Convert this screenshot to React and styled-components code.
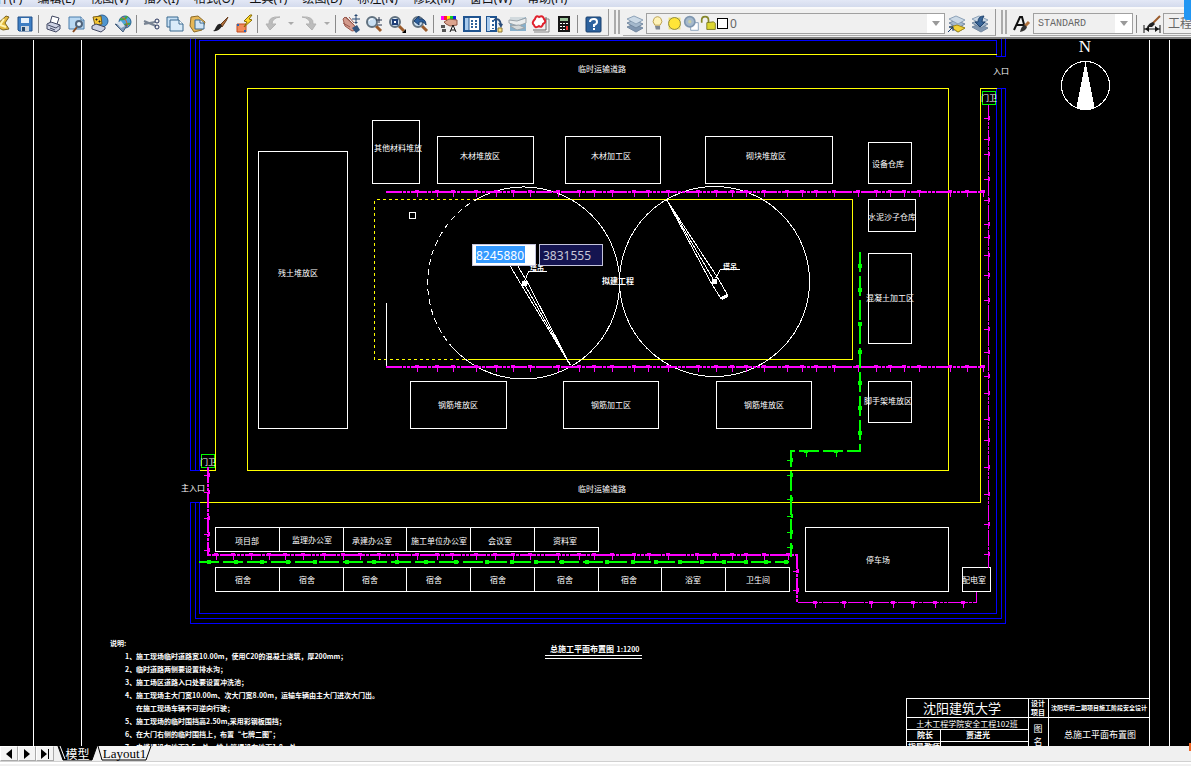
import styled, { createGlobalStyle } from "styled-components";

const menus = [
  "文件(F)",
  "编辑(E)",
  "视图(V)",
  "插入(I)",
  "格式(O)",
  "工具(T)",
  "绘图(D)",
  "标注(N)",
  "修改(M)",
  "窗口(W)",
  "帮助(H)",
];

const printer = (
  <>
    <path d="M6 9 8 2l7 2-2 6" fill="#fff" stroke="#3f4660" />
    <path d="M3 10l4-2 9 3v4l-4 3-9-3z" fill="#cdd2e4" stroke="#3f4660" />
    <path d="M4 11l8 3 4-3M6 14l5 2" fill="none" stroke="#3f4660" />
  </>
);

const lens = (
  <>
    <path d="M12 12l5 5" stroke="#9a5b2b" strokeWidth="3" />
    <circle cx="8" cy="8" r="5" fill="#c9dff2" stroke="#61717f" strokeWidth="2" />
    <path d="M5 7q1-3 4-2" fill="none" stroke="#fff" />
  </>
);

const layers = (
  <>
    <path d="M2 13l7-3 9 4-7 4z" fill="#8096b0" stroke="#7388a0" />
    <path d="M2 9l7-3 9 4-7 4z" fill="#a4b8cc" stroke="#7388a0" />
    <path d="M2 5l7-3 9 4-7 4z" fill="#cbd9e6" stroke="#8da2b8" />
  </>
);

const icons = {
  open: (
    <>
      <path d="M3 12 14 2l3 1-4 6 4 6-6 1z" fill="#e3b93c" stroke="#7b6420" />
      <path d="M12 5 8 11l6 2" fill="none" stroke="#fff3b0" strokeWidth="2" />
    </>
  ),
  save: (
    <>
      <path d="M3 3h14v14H4l-1-1z" fill="#3e7fc4" stroke="#1f4f88" />
      <path d="M6 4h8v5H6z" fill="#e8f2fb" />
      <path d="M6 12h8v5H6z" fill="#cfd8e0" />
      <path d="M7 13h3v4H7z" fill="#23486e" />
    </>
  ),
  print: printer,
  preview: (
    <>
      <path d="M2 3h12l3 3v9H2z" fill="#b9d8f2" stroke="#4b7cab" />
      <path d="M14 3v3h3" fill="#fff" stroke="#4b7cab" />
      <path d="M10 13l-4 5" stroke="#8a4a1e" strokeWidth="2" />
      <circle cx="12" cy="10" r="3" fill="#e6f3fd" stroke="#50647c" strokeWidth="2" />
    </>
  ),
  publish: (
    <>
      <circle cx="12" cy="7" r="6" fill="#4f95cf" stroke="#2a5f92" />
      <path d="M3 3l8-1 1 8-7 1z" fill="#f4c534" stroke="#7a5c12" />
      <path d="M6 5h1v1H6zM9 7h1v1H9z" stroke="#222" />
      <path d="M2 12l4-2 9 3v2l-4 3-9-3z" fill="#cdd2e4" stroke="#3f4660" />
    </>
  ),
  globe: (
    <>
      <circle cx="12" cy="8" r="6" fill="#4fa4d8" stroke="#28618f" />
      <path d="M7 5q6 1 7-3M9 13q5-4 8-3" fill="none" stroke="#45a53d" strokeWidth="2" />
      <path d="M9 3q6 3 5 10" fill="none" stroke="#e35d2d" />
      <path d="M2 10l6 2 6-1-4 7z" fill="#7f9ab9" stroke="#46607e" />
      <path d="M3 9l5-2 4 5-4 2z" fill="#d7e2ee" />
    </>
  ),
  cut: (
    <>
      <path d="M2 7l12 5M2 10l11-2" stroke="#7a8594" strokeWidth="2" />
      <circle cx="15" cy="7" r="2" fill="none" stroke="#27345c" />
      <circle cx="15" cy="13" r="2" fill="none" stroke="#27345c" />
    </>
  ),
  copy: (
    <>
      <path d="M2 3h11v10H2z" fill="#c7e0f5" stroke="#38688f" />
      <path d="M5 6h9l4 4v7H5z" fill="#d9ebf9" stroke="#38688f" />
      <path d="M14 6v4h4" fill="#fff" stroke="#38688f" />
    </>
  ),
  paste: (
    <>
      <path d="M3 3l7-1 7 6-3 8-8 2-4-6z" fill="#e6b756" stroke="#8d6a26" />
      <path d="M7 6h5l4 3v6H7z" fill="#cfe4f5" stroke="#38688f" />
      <path d="M12 6v3h4" fill="#fff" stroke="#38688f" />
    </>
  ),
  brush: (
    <>
      <path d="M9 11l7-7 1-1-2 4-4 6z" fill="#b0713c" stroke="#6a3d1c" />
      <path d="M10 10q-3-1-5 3-1 3-3 4 6 1 9-5z" fill="#222" />
    </>
  ),
  match: (
    <>
      <path d="M3 10h9v8H3z" fill="#f08a5a" stroke="#c14a1f" />
      <path d="M3 10h2v2H3zM10 16h2v2h-2z" fill="#2a64b4" />
      <path d="M16 1l-6 6 3 1-3 5 8-7-3-1 3-4z" fill="#ffd92e" stroke="#8a6d00" />
    </>
  ),
  undo: (
    <path d="M17 3Q9 4 9 10h4l-6 6-4-6h3Q5 2 17 3z" fill="#bcbcbc" stroke="#b2b2b2" />
  ),
  redo: (
    <path d="M3 3q8 1 8 7H7l6 6 4-6h-3Q15 2 3 3z" fill="#bcbcbc" stroke="#b2b2b2" />
  ),
  pan: (
    <>
      <path d="M2 5l2-2 9 8 3 5-5 1-7-5z" fill="#d39a8c" stroke="#98584c" />
      <path d="M2 9l7 4M5 3l8 8M8 3l5 6" stroke="#98584c" />
      <path d="M11 14l5-3 3 5-4 3z" fill="#31557f" />
      <path d="M15 1v8M11 5h8" stroke="#2b4a72" />
      <path d="M15 0l2 2h-4zM15 10l2-2h-4z" fill="#2b4a72" />
    </>
  ),
  zoom: (
    <>
      {lens}
      <path d="M15 3v6M12 6h6M13 11h5" stroke="#24324d" />
    </>
  ),
  zoomWindow: (
    <>
      {lens}
      <path d="M6 6h4v4H6z" fill="#fff" stroke="#1f3f78" strokeWidth="2" />
      <path d="M19 15v4h-4z" fill="#000" />
    </>
  ),
  zoomPrevious: (
    <>
      {lens}
      <path d="M4 7l5-5v3q7-1 7 6-2-4-7-3v3z" fill="#2b5f9e" stroke="#1c3f6d" />
    </>
  ),
  properties: (
    <>
      <path d="M2 2h3v4H2z" fill="#f0f" />
      <path d="M5 2h3v4H5z" fill="#f22" />
      <path d="M8 2h3v4H8z" fill="#fe0" />
      <path d="M11 2h3v4h-3z" fill="#1c2" />
      <path d="M14 2h3v4h-3z" fill="#12d" />
      <path d="M5 8l5-3 8 1v5l-7 1-4-2z" fill="#dba48e" stroke="#8d5545" />
      <path d="M2 11h4v3H2zM3 15h4v3H3z" fill="#555" />
      <path d="M11 18l3-7 3 7M12 16h4" fill="none" stroke="#111" />
    </>
  ),
  designCenter: (
    <>
      <path d="M2 3h16v14H2z" fill="#fff" stroke="#1f5490" strokeWidth="2" />
      <path d="M3 4h4v12H3z" fill="#a9cbed" />
      <path d="M7 4v12" stroke="#1f5490" />
      <path d="M9 6h2v2H9zM13 6h2v2h-2zM9 9h2v2H9zM13 9h2v2h-2zM9 12h2v2H9zM13 12h2v2h-2z" fill="#2f639b" />
    </>
  ),
  palettes: (
    <>
      <path d="M2 3h9v14H2z" fill="#fff" stroke="#1f5490" strokeWidth="2" />
      <path d="M2 3h3v14H2z" fill="#a9cbed" />
      <path d="M7 6h2v2H7zM7 10h2v2H7zM7 14h2v1H7z" fill="#2f639b" />
      <path d="M9 6q6-3 7 5" fill="none" stroke="#2a4d7a" strokeWidth="2" />
      <path d="M13 9l5 1-2 4z" fill="#2a4d7a" />
      <path d="M13 14h4v4h-4z" fill="#ffe27c" stroke="#8a7635" />
    </>
  ),
  sheetSet: (
    <>
      <path d="M2 3h16v14H2z" fill="#86b0cc" />
      <path d="M2 3h16L9 7H2z" fill="#d2dade" />
      <path d="M1 6l8 1 9-3v5l-8 3-9-3z" fill="#e9eced" stroke="#9aa3a9" />
      <path d="M2 12l9-1 6 3-8 2z" fill="#d5d9da" stroke="#9aa3a9" />
    </>
  ),
  markup: (
    <>
      <path d="M5 5h13v13H3" fill="none" stroke="#888" />
      <path d="M15 3v13H2" fill="none" stroke="#666" />
      <path d="M4 5q1-4 4-2 4-2 5 2 3 3-1 5-1 4-4 2-4 3-5-1-3-2 1-6z" fill="#fff" stroke="#e0202c" strokeWidth="2" />
    </>
  ),
  calculator: (
    <>
      <path d="M4 2h12v16H4z" fill="#161616" />
      <path d="M6 4h8v3H6z" fill="#9cc59a" />
      <path d="M6 9h2v1H6zM9 9h2v1H9zM12 9h2v1h-2zM6 12h2v1H6zM9 12h2v1H9zM6 15h2v1H6zM9 15h2v1H9z" fill="#fff" />
      <path d="M12 12h2v4h-2z" fill="#e33" />
    </>
  ),
  help: (
    <>
      <rect x="3" y="3" width="15" height="15" rx="1" fill="#2d629e" stroke="#183f6c" />
      <path d="M7 8q0-3 4-3 3 0 3 3 0 2-3 3v2" fill="none" stroke="#fff" strokeWidth="2" />
      <path d="M10 14h2v2h-2z" fill="#fff" />
    </>
  ),
  layers,
  layerCurrent: (
    <>
      {layers}
      <path d="M4 13l6-2 8 3-7 4z" fill="#f2d33a" stroke="#a78b14" />
      <path d="M1 18l5-5M6 17v-4H2" fill="none" stroke="#173a6e" />
    </>
  ),
  layerPrevious: (
    <>
      {layers}
      <path d="M5 8h3q0-6 6-6-2 2-2 6h3l-5 5z" fill="#3a6698" stroke="#1e426e" />
    </>
  ),
  textStyle: (
    <>
      <path d="M2 16 8 3h2l3 11M5 11h7" fill="none" stroke="#111" strokeWidth="2" />
      <path d="M13 12l4-4" stroke="#b0713c" strokeWidth="3" />
      <path d="M13 11q-4 1-5 7 6-1 7-5z" fill="#333" />
    </>
  ),
  dimStyle: (
    <>
      <path d="M2 11v8M18 11v8M2 15h16" stroke="#111" strokeWidth="1" />
      <path d="M3 15l4-3v6zM17 15l-4-3v6z" fill="#111" />
      <path d="M11 9l7-7" stroke="#9a5b2b" strokeWidth="2" />
      <path d="M11 8q-4 1-6 5h5l3-3z" fill="#222" />
    </>
  ),
  bulb: (
    <>
      <path d="M7 12q-4-4-1-8 4-4 8 0 3 4-1 8z" fill="#fff3b8" stroke="#b39640" />
      <path d="M7 13h6v4H8z" fill="#7f8894" />
    </>
  ),
  sun: (
    <>
      <path d="M3 3h14v14H3z" fill="#f0e27a" />
      <circle cx="10" cy="10" r="7" fill="#ffe537" stroke="#7d7a3c" strokeWidth="1" />
    </>
  ),
  freeze: (
    <>
      <path d="M9 9h9v9H9z" fill="#fff" stroke="#7d98b5" />
      <circle cx="8" cy="8" r="6" fill="#a5b9cc" stroke="#7e96af" strokeWidth="2" />
      <circle cx="8" cy="8" r="2" fill="#c9cfa8" />
    </>
  ),
  lock: (
    <>
      <path d="M2 9V6q0-4 4-4t4 4v4" fill="none" stroke="#85862a" strokeWidth="2" />
      <path d="M8 9l8-1 2 2v7H8z" fill="#dcd632" stroke="#74721a" />
    </>
  ),
};

const fileTools = [
  ["open", "save"],
  ["print", "preview", "publish", "globe"],
  ["cut", "copy", "paste", "brush", "match"],
  ["undo", "undoList", "redo", "redoList"],
  ["pan", "zoom", "zoomWindow", "zoomPrevious"],
  ["properties", "designCenter", "palettes", "sheetSet", "markup", "calculator"],
  ["help"],
];

// x, y, width, height
const buildings = [
  [258, 151, 89, 277],
  [372, 120, 47, 63],
  [437, 136, 96, 47],
  [565, 136, 95, 47],
  [705, 136, 127, 47],
  [868, 142, 43, 41],
  [868, 199, 47, 32],
  [868, 253, 43, 90],
  [868, 381, 43, 41],
  [410, 381, 96, 47],
  [563, 381, 95, 47],
  [716, 381, 95, 47],
  [805, 527, 143, 64],
  [962, 567, 28, 24],
];

const labels = [
  ["临时运输道路", 602, 72],
  ["临时运输道路", 602, 492],
  ["入口", 1001, 74],
  ["主入口", 193, 491],
  ["门卫", 989, 101],
  ["门卫", 208, 465],
  ["残土堆放区", 298, 276],
  ["其他材料堆放", 398, 151],
  ["木材堆放区", 480, 159],
  ["木材加工区", 611, 159],
  ["砌块堆放区", 766, 159],
  ["设备仓库", 888, 167],
  ["水泥沙子仓库", 892, 220],
  ["混凝土加工区", 890, 301],
  ["脚手架堆放区", 888, 404],
  ["钢筋堆放区", 458, 408],
  ["钢筋加工区", 611, 408],
  ["钢筋堆放区", 764, 408],
  ["项目部", 247, 544],
  ["监理办公室", 312, 543],
  ["承建办公室", 372, 544],
  ["施工单位办公室", 439, 544],
  ["会议室", 500, 544],
  ["资料室", 565, 544],
  ["宿舍", 243, 583],
  ["宿舍", 307, 583],
  ["宿舍", 370, 583],
  ["宿舍", 434, 583],
  ["宿舍", 498, 583],
  ["宿舍", 565, 583],
  ["宿舍", 629, 583],
  ["浴室", 693, 583],
  ["卫生间", 758, 583],
  ["停车场", 878, 563],
  ["配电室", 974, 583],
];

const notes = [
  ["1、", "施工现场临时道路宽10.00m，使用C20的混凝土浇筑，厚200mm；"],
  ["2、", "临时道路两侧要设置排水沟；"],
  ["3、", "施工场区道路入口处要设置冲洗池；"],
  ["4、", "施工现场主大门宽10.00m、次大门宽8.00m，运输车辆由主大门进次大门出。"],
  ["", "在施工现场车辆不可逆向行驶；"],
  ["5、", "施工现场的临时围挡高2.50m,采用彩钢板围挡；"],
  ["6、", "在大门右侧的临时围挡上，布置“七牌二图”；"],
  ["7、", "电缆埋设在地下2.5m处，排水管埋设在地下1.8m处。"],
];

const officeWalls = [279, 343, 406, 470, 534];
const dormWalls = [279, 343, 406, 470, 534, 598, 661, 725];

const powerTicks = [
  417, 437, 453, 476, 496, 513, 530, 558, 579, 594, 612, 634, 648, 668, 698,
  716, 732, 746, 764, 787, 802, 816, 834, 858, 876, 890, 904, 919, 950, 967,
  983,
];
const lowerPowerTicks = [
  216, 233, 251, 269, 285, 303, 324, 343, 360, 379, 397, 417, 437, 452, 476,
  495, 513, 530, 558, 579, 594, 612, 634, 649, 668, 697, 715, 732, 746, 764,
  788,
];
const thinPowerTicks = [815, 844, 871, 893, 913, 935, 963];
const eastTicks = [
  118, 139, 154, 179, 200, 224, 237, 255, 275, 300, 329, 352, 376, 393, 419,
  440, 467, 494, 524, 554,
];
const westTicks = [475, 492, 518, 534, 550];
const waterTicks = [
  209, 236, 262, 288, 315, 347, 374, 397, 426, 456, 487, 512, 536, 562, 587,
  607, 633, 656, 680, 702, 724, 746, 766, 786,
];

const downTicks = (xs, y) =>
  xs.map((x) => `M${x - 2} ${y - 2}h4v3h-1v4h-1v-4h-2z`).join("");
const leftTicks = (ys, x) =>
  ys.map((y) => `M${x - 4} ${y}h4v-2h2v4h-2v-1h-4z`).join("");
const crossTicks = (points) =>
  points.map(([x, y]) => `M${x - 2} ${y - 2}h4v4h-4z`).join("");

function Icon({ name, size = 20 }) {
  return (
    <svg width={size} height={size} viewBox="0 0 20 20" aria-hidden="true">
      {icons[name]}
    </svg>
  );
}

function Tool({ name }) {
  if (name.endsWith("List")) {
    return (
      <ListButton aria-label={name}>
        <svg width="6" height="4" aria-hidden="true">
          <path d="M0 0h6l-3 3z" fill="#aaa" />
        </svg>
      </ListButton>
    );
  }
  return (
    <ToolButton aria-label={name}>
      <Icon name={name} />
    </ToolButton>
  );
}

function Arrow() {
  return (
    <ArrowBox>
      <svg width="8" height="5" aria-hidden="true">
        <path d="M0 0h8l-4 5z" fill="#9a9a9a" />
      </svg>
    </ArrowBox>
  );
}

function SitePlan() {
  return (
    <Plan role="img" aria-label="总施工平面布置图">
      <g transform="translate(0.5 -38.5)" fill="none" shapeRendering="crispEdges">
        <path
          d="M33 39V746M81 39V746M1149 39V746M1169 39V746"
          stroke="#fff"
        />

        {/* site wall */}
        <path
          d="M190 30V470H199V40H996V56H1005V30M195 30V470M1001 30V56
             M199 502H190V623H1005V88H996V613H199V502M195 502V618H1001V88"
          stroke="#00f"
        />

        {/* roads */}
        <path
          d="M996 54H215V470H199M996 88H980V502H199M247 88H948V470H247Z"
          stroke="#ff0"
        />
        <path d="M475 199H852V359H467" stroke="#ff0" />
        <path d="M475 199H374V359H467" stroke="#ff0" strokeDasharray="3 3" />

        <g stroke="#fff">
          {buildings.map(([x, y, width, height]) => (
            <rect key={`${x}-${y}`} x={x} y={y} width={width} height={height} />
          ))}
          <path d="M215 527H598V551H215ZM215 567H789V591H215Z" />
          <path d={officeWalls.map((x) => `M${x} 527v24`).join("")} />
          <path d={dormWalls.map((x) => `M${x} 567v24`).join("")} />
          <path d="M386 302V366" />
          <path d="M409 212h6v6h-6z" />
        </g>

        <path
          d="M988 104V567M797 602H976V591"
          stroke="#f0f"
          strokeDasharray="16 1 3 1 3 1"
        />
        <path d="M982 91h13v13h-13zM201 454h13v13h-13z" stroke="#0f0" />

        {/* tower cranes */}
        <g stroke="#fff">
          <path d="M474 200A96 96 0 1 1 453 348" />
          <path d="M453 348A96 96 0 0 1 474 200" strokeDasharray="6 4" />
          <circle cx="714" cy="281" r="95" />
          <path d="M570 365 520 283 510 266M570 365 526 280 517 265M570 365 523 282" />
          <path d="M666 199 711 283 721 299M666 199 717 277 728 296M666 199 714 281" />
          <path d="M524 281 528 271H546M715 278 720 269H739" />
          <path d="M721 298 727 295" strokeWidth="3" />
        </g>
        <path d="M521 280h5v5h-5zM711 278h5v5h-5z" fill="#fff" />

        {/* north arrow */}
        <circle cx="1085" cy="85" r="24" stroke="#fff" />
        <path d="M1085 61 1094 107Q1085 110 1076 107Z" fill="#fff" />

        <path d="M544 655H641M544 658H641" stroke="#fff" />

        {/* title block */}
        <path
          d="M1149 698H906V750M1028 698V750M1048 698V750M906 717H1149
             M906 729H1028M906 741H1028M940 729V750"
          stroke="#fff"
        />
      </g>

      {/* supply lines, two pixels wide */}
      <g transform="translate(0 -39)" fill="none" shapeRendering="crispEdges">
        <path
          d="M386 192H985M386 367H985M208 467V555H797V602"
          stroke="#f0f"
          strokeWidth="2"
          strokeDasharray="16 1 3 1 3 1"
        />
        <path
          d={
            downTicks(powerTicks, 192) +
            downTicks(powerTicks, 367) +
            downTicks(lowerPowerTicks, 555) +
            downTicks(thinPowerTicks, 603) +
            leftTicks(eastTicks, 988) +
            leftTicks(westTicks, 208) +
            leftTicks([571, 590], 797)
          }
          fill="#f0f"
        />
        <path
          d="M199 562H789M860 252V451H791V557"
          stroke="#0f0"
          strokeWidth="2"
          strokeDasharray="20 4"
        />
        <path
          d={
            crossTicks(waterTicks.map((x) => [x, 562])) +
            crossTicks([266, 290, 324, 352, 383, 408, 433].map((y) => [860, y])) +
            leftTicks([460, 475, 499, 516, 532, 547], 791) +
            downTicks([806, 836], 452)
          }
          fill="#0f0"
        />
      </g>

      <g transform="translate(0 -39)" fill="#fff">
        {labels.map(([text, x, y]) => (
          <Label key={`${x}-${y}`} x={x} y={y}>
            {text}
          </Label>
        ))}
        <BoldLabel x="618" y="284">拟建工程</BoldLabel>
        <BoldLabel x="537" y="270" $size={7}>塔吊</BoldLabel>
        <BoldLabel x="730" y="269" $size={7}>塔吊</BoldLabel>
        <NorthLabel x="1085" y="52">N</NorthLabel>

        <BoldLabel x="582" y="652">总施工平面布置图</BoldLabel>
        <BoldLabel x="628" y="652" $size={7}>1:1200</BoldLabel>

        <Note x="110" y="646">说明:</Note>
        {notes.map(([number, text], i) => (
          <g key={text}>
            <Note x="125" y={659 + i * 13}>{number}</Note>
            <Note x="136" y={659 + i * 13}>{text}</Note>
          </g>
        ))}

        <Label x="962" y="713" $size={13}>沈阳建筑大学</Label>
        <Label x="967" y="727">土木工程学院安全工程102班</Label>
        <BoldLabel x="925" y="738">院长</BoldLabel>
        <BoldLabel x="978" y="738">贾进光</BoldLabel>
        <BoldLabel x="924" y="750">指导教师</BoldLabel>
        <BoldLabel x="1038" y="706" $size={7}>设计</BoldLabel>
        <BoldLabel x="1038" y="715" $size={7}>项目</BoldLabel>
        <Label x="1038" y="732" $size={9}>图</Label>
        <Label x="1038" y="745" $size={9}>名</Label>
        <BoldLabel x="1099" y="710" $size={6}>沈阳华府二期项目施工阶段安全设计</BoldLabel>
        <Label x="1100" y="738" $size={9}>总施工平面布置图</Label>
      </g>
    </Plan>
  );
}

export default function App() {
  return (
    <Window>
      <GlobalStyle />
      <MenuBar>
        {menus.map((menu) => (
          <MenuButton key={menu}>{menu}</MenuButton>
        ))}
      </MenuBar>

      <ToolbarRow>
        <ToolGroup>
          {fileTools.map((group) => (
            <ToolSection key={group[0]}>
              {group.map((name) => (
                <Tool key={name} name={name} />
              ))}
            </ToolSection>
          ))}
        </ToolGroup>
        <Grip />
        <ToolGroup>
          <Tool name="layers" />
          <Combo $width={299}>
            <Icon name="bulb" size={17} />
            <Icon name="sun" size={17} />
            <Icon name="freeze" size={17} />
            <Icon name="lock" size={17} />
            <Swatch />
            <ComboSelect aria-label="图层">
              <option>0</option>
            </ComboSelect>
            <Arrow />
          </Combo>
          <Tool name="layerCurrent" />
          <Tool name="layerPrevious" />
        </ToolGroup>
        <Grip />
        <ToolGroup>
          <Tool name="textStyle" />
          <Combo $width={100}>
            <ComboSelect aria-label="文字样式" $mono>
              <option>STANDARD</option>
            </ComboSelect>
            <Arrow />
          </Combo>
          <Divider />
          <Tool name="dimStyle" />
          <Combo $width={120}>
            <ComboSelect aria-label="标注样式">
              <option>工程</option>
            </ComboSelect>
            <Arrow />
          </Combo>
        </ToolGroup>
      </ToolbarRow>

      <Canvas>
        <SitePlan />
        <CoordinateEntry>
          <CoordinateInput aria-label="X" defaultValue="8245880" $active />
          <CoordinateInput aria-label="Y" defaultValue="3831555" />
        </CoordinateEntry>
      </Canvas>

      <TabBar>
        <NavButton aria-label="上一个">
          <svg width="6" height="10"><path d="M6 0v10L0 5z" /></svg>
        </NavButton>
        <NavButton aria-label="下一个">
          <svg width="6" height="10"><path d="M0 0v10l6-5z" /></svg>
        </NavButton>
        <NavButton aria-label="最后一个">
          <svg width="8" height="10"><path d="M0 0v10l6-5zM7 0h1v10H7z" /></svg>
        </NavButton>
        <Tabs>
          <TabButton $active $width={41}>
            <TabShape viewBox="0 0 41 15">
              <path d="M1 0l5 14h29l5-14" fill="#000" stroke="#000" />
              <path d="M3 0l5 13" stroke="#fff" />
            </TabShape>
            <TabText>模型</TabText>
          </TabButton>
          <TabButton $width={55}>
            <TabShape viewBox="0 0 55 15">
              <path d="M1 0l4 14h44l5-14" fill="#f4f4f4" stroke="#000" />
            </TabShape>
            <TabText $serif>Layout1</TabText>
          </TabButton>
        </Tabs>
      </TabBar>
      <StatusStrip />
      <CornerBadge />
      <EdgeBadge />
    </Window>
  );
}

const GlobalStyle = createGlobalStyle`
  * {
    box-sizing: border-box;
  }

  body {
    margin: 0;
    overflow: hidden;
    background: #f0f0f0;
    font-family: "Liberation Sans", "Noto Sans CJK SC", sans-serif;
  }

  button, input, select {
    margin: 0;
    padding: 0;
    border: 0;
    background: none;
    font: inherit;
    color: inherit;
  }
`;

const Window = styled.div`
  position: relative;
  display: flex;
  flex-direction: column;
  height: 100vh;
  overflow: hidden;
`;

const MenuBar = styled.nav`
  display: flex;
  align-items: flex-end;
  gap: 15px;
  flex: none;
  height: 9px;
  overflow: hidden;
  background: linear-gradient(#e3e8f6, #d4dbed);
  border-bottom: 2px solid #fafafa;
`;

const MenuButton = styled.button`
  flex: none;
  font-family: "Noto Sans", "Noto Sans CJK SC", sans-serif;
  font-size: 12px;
  line-height: 16px;
  color: #111;

  &:first-child {
    margin-left: -15px;
  }
`;

const ToolbarRow = styled.div`
  display: flex;
  flex: none;
  height: 30px;
  overflow: hidden;
  background: #f0f0f0;
  border-bottom: 2px solid #808080;
`;

const ToolGroup = styled.div`
  display: flex;
  align-items: center;
  flex: none;
  height: 27px;
  padding-right: 4px;
  border-right: 1px solid #999;
  border-bottom: 1px solid #aaa;
`;

const ToolSection = styled.div`
  display: flex;
  align-items: center;

  &:first-child {
    margin-left: -10px;
  }

  & + &::before {
    content: "";
    width: 1px;
    height: 18px;
    margin: 3px 3px 0 2px;
    background: #8a8a8a;
  }
`;

const ToolButton = styled.button`
  display: flex;
  align-items: center;
  justify-content: center;
  flex: none;
  width: 23px;
  height: 24px;
  margin-top: 3px;
`;

const ListButton = styled(ToolButton)`
  width: 13px;
`;

const Grip = styled.div`
  flex: none;
  width: 6px;
  height: 24px;
  margin: 1px 3px 0 5px;
  border: 1px solid #aaa;
  border-width: 0 2px;
`;

const Divider = styled.div`
  width: 1px;
  height: 18px;
  margin: 3px 3px 0;
  background: #8a8a8a;
`;

const Combo = styled.div`
  display: flex;
  align-items: center;
  flex: none;
  width: ${({ $width }) => $width}px;
  height: 21px;
  margin-top: 3px;
  padding-left: 2px;
  border: 1px solid #a0a0a0;
  background: #f0f0f0;
`;

const ComboSelect = styled.select`
  flex: 1;
  min-width: 0;
  padding-left: 2px;
  appearance: none;
  outline: none;
  font-family: ${({ $mono }) => ($mono ? '"Liberation Mono", monospace' : '"Noto Sans", "Noto Sans CJK SC", sans-serif')};
  font-size: ${({ $mono }) => ($mono ? 10 : 12)}px;
  line-height: 18px;
  color: #666;
`;

const ArrowBox = styled.span`
  display: flex;
  align-items: center;
  justify-content: center;
  width: 17px;
  height: 19px;
  background: #fff;
`;

const Swatch = styled.span`
  flex: none;
  width: 11px;
  height: 11px;
  border: 1px solid #000;
  background: #fff;
`;

const Canvas = styled.main`
  position: relative;
  flex: 1;
  min-height: 0;
  overflow: hidden;
  background: #000;
`;

const Plan = styled.svg`
  display: block;
  width: 100%;
  height: 100%;
`;

const Label = styled.text`
  font-family: "Noto Sans CJK SC", sans-serif;
  font-size: ${({ $size = 8 }) => $size}px;
  text-anchor: middle;
`;

const BoldLabel = styled(Label)`
  font-weight: 700;
`;

const NorthLabel = styled.text`
  font-family: "Liberation Serif", serif;
  font-size: 17px;
  text-anchor: middle;
`;

const Note = styled.text`
  font-family: "Noto Sans CJK SC", sans-serif;
  font-size: 7px;
  font-weight: 700;
`;

const CoordinateEntry = styled.div`
  position: absolute;
  top: 205px;
  left: 472px;
  display: flex;
  gap: 3px;
`;

const CoordinateInput = styled.input`
  width: 64px;
  height: 22px;
  padding-left: 3px;
  border: 1px solid #c4c4dc;
  outline: none;
  font-family: "Noto Sans", sans-serif;
  font-size: 12px;
  color: ${({ $active }) => ($active ? "#fff" : "#c8c8d8")};
  background: ${({ $active }) =>
    $active
      ? "linear-gradient(#39f, #39f) 3px 1px / 49px 17px no-repeat #fff"
      : "#141450"};
`;

const TabBar = styled.footer`
  display: flex;
  flex: none;
  height: 15px;
  background: #f0f0f0;
`;

const NavButton = styled.button`
  display: flex;
  align-items: center;
  justify-content: center;
  width: 18px;
  height: 15px;
  border: 1px solid #aaa;
  border-top-color: #fff;
  border-left-color: #fff;
  background: #f4f4f4;
`;

const Tabs = styled.div`
  display: flex;
  padding-left: 3px;
`;

const TabButton = styled.button`
  position: relative;
  width: ${({ $width }) => $width}px;
  height: 15px;
  margin-right: -1px;
  color: ${({ $active }) => ($active ? "#fff" : "#000")};
`;

const TabShape = styled.svg`
  position: absolute;
  inset: 0;
  width: 100%;
  height: 100%;
`;

const TabText = styled.span`
  position: relative;
  display: block;
  font-family: ${({ $serif }) => ($serif ? '"Liberation Serif", serif' : '"Noto Sans CJK SC", sans-serif')};
  font-size: ${({ $serif }) => ($serif ? 13 : 12)}px;
  line-height: 14px;
`;

const StatusStrip = styled.div`
  flex: none;
  height: 5px;
  border-top: 1px solid #d0d0d0;
  background: linear-gradient(#fff 2px, #f0f0f0 2px);
`;

const CornerBadge = styled.div`
  position: absolute;
  top: 0;
  right: 0;
  width: 7px;
  height: 20px;
  border-radius: 0 0 0 3px;
  background: #2196f3;
`;

const EdgeBadge = styled.div`
  position: absolute;
  right: 0;
  bottom: 15px;
  width: 2px;
  height: 8px;
  background: #f26522;
`;
